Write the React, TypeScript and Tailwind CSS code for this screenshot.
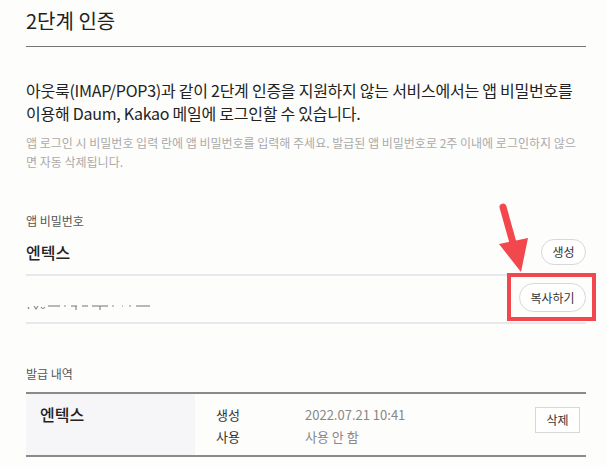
import React from "react";

const font = { fontFamily: '"Noto Sans CJK KR", "Noto Sans", sans-serif' };

function Masked() {
  return (
    <svg width="140" height="6" viewBox="0 0 140 6" className="mb-[1px]">
      <g stroke="#8a8a8a" strokeWidth="1.2" fill="none">
        <line x1="2" y1="2" x2="3" y2="4" />
        <path d="M8 1 L10 4 L12 1" />
        <path d="M15 2 Q17 5 19 2" />
        <line x1="22" y1="1" x2="34" y2="1" />
        <line x1="38" y1="1" x2="40" y2="1" />
        <line x1="45" y1="1" x2="51" y2="1" />
        <line x1="50" y1="1" x2="50" y2="5" />
        <line x1="56" y1="1" x2="62" y2="1" />
        <line x1="66" y1="1" x2="82" y2="1" />
        <line x1="74" y1="1" x2="74" y2="5" />
        <line x1="86" y1="1" x2="88" y2="1" />
        <line x1="96" y1="1" x2="97" y2="1" />
        <line x1="103" y1="1" x2="105" y2="1" />
        <line x1="110" y1="1" x2="124" y2="1" />
      </g>
    </svg>
  );
}

export default function App() {
  return (
    <div
      className="relative w-[607px] h-[467px] overflow-hidden bg-[#fdfdfc] pl-[26px] pr-[21px] text-[#222]"
      style={font}
    >
      <div className="pt-[7px] pb-[11px] border-b border-[#777] text-[20px] leading-[28px]">
        2단계 인증
      </div>

      <p className="mt-[32px] text-[16px] leading-[23px] text-[#222] tracking-[-0.25px]">
        아웃룩(IMAP/POP3)과 같이 2단계 인증을 지원하지 않는 서비스에서는 앱 비밀번호를 이용해 Daum, Kakao 메일에 로그인할 수 있습니다.
      </p>
      <p className="mt-[8px] text-[12px] leading-[19px] text-[#aaa] break-all">
        앱 로그인 시 비밀번호 입력 란에 앱 비밀번호를 입력해 주세요. 발급된 앱 비밀번호로 2주 이내에 로그인하지 않으면 자동 삭제됩니다.
      </p>

      <div className="mt-[41px] text-[12px] leading-[18px] text-[#555]">앱 비밀번호</div>

      <div className="mt-[9px] pb-[9px] border-b-2 border-[#e8e8ec] flex items-center justify-between">
        <span className="text-[16px] leading-[26px] font-medium">엔텍스</span>
        <button className="h-[26px] w-[45px] rounded-full border border-[#d8d8d8] bg-white text-[12px] text-[#333]">
          생성
        </button>
      </div>

      <div className="pt-[7px] pb-[10px] border-b-2 border-[#e8e8ec] flex items-end justify-between">
        <Masked />
        <button className="h-[29px] w-[67px] rounded-full border border-[#d8d8d8] bg-white text-[12px] text-[#333]">
          복사하기
        </button>
      </div>

      <div className="mt-[41px] text-[12px] leading-[18px] text-[#555]">발급 내역</div>

      <div className="mt-[9px] border-t-2 border-b-2 border-[#8a8a8a] flex h-[65px]">
        <div className="w-[169px] bg-[#f6f5f8] pl-[14px] pt-[9px] text-[16px] leading-[22px] font-medium">
          엔텍스
        </div>
        <div className="pl-[21px] pt-[10px] text-[13px] leading-[22px]">
          <div className="flex">
            <span className="w-[89px] text-[#333]">생성</span>
            <span className="text-[#888]">2022.07.21 10:41</span>
          </div>
          <div className="flex">
            <span className="w-[89px] text-[#333]">사용</span>
            <span className="text-[#888]">사용 안 함</span>
          </div>
        </div>
        <div className="ml-auto pr-[6px] pt-[12px]">
          <button className="h-[26px] w-[45px] border border-[#d8d8d8] bg-white text-[12px] text-[#333]">
            삭제
          </button>
        </div>
      </div>

      {/* annotation */}
      <div className="absolute left-[507px] top-[273px] w-[89px] h-[48px] border-[4px] border-[#f2474c]" />
      <svg className="absolute left-[490px] top-[200px]" width="50" height="76" viewBox="0 0 50 76">
        <line x1="13" y1="7" x2="25" y2="50" stroke="#f2474c" strokeWidth="7" strokeLinecap="round" />
        <polygon points="9,44 38,38 31,72" fill="#f2474c" />
      </svg>
    </div>
  );
}
